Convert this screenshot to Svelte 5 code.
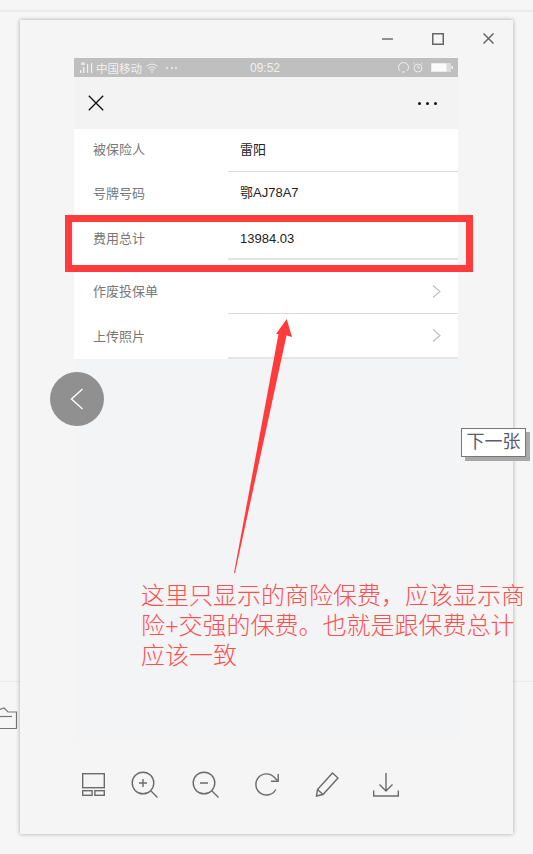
<script>
  const rows = [
    { label: "被保险人", value: "雷阳", first: true },
    { label: "号牌号码", value: "鄂AJ78A7" },
    { label: "费用总计", value: "13984.03", tall: true },
    { label: "作废投保单", arrow: true, gap: true },
    { label: "上传照片", arrow: true, last: true },
  ];
</script>

<div class="page">
  <div class="top-line"></div>
  <div class="side-line"></div>
  <svg class="folder" width="18" height="22" viewBox="0 0 18 22" fill="none" stroke="#777" stroke-width="1.2">
    <path d="M-2 3 L4 1 L8 5 H16.5 V21 Q16.5 21.5 16 21.5 H-2" />
    <path d="M-2 9.5 H12" />
  </svg>

  <div class="window">
    <div class="titlebar">
      <svg width="11" height="12" viewBox="0 0 11 12" stroke="#666" stroke-width="1.4"><path d="M0 6H11" /></svg>
      <svg width="12" height="12" viewBox="0 0 12 12" fill="none" stroke="#666" stroke-width="1.5"><rect x="0.75" y="0.75" width="10.5" height="10.5" /></svg>
      <svg width="11" height="11" viewBox="0 0 11 11" stroke="#666" stroke-width="1.5"><path d="M0.5 0.5L10.5 10.5M10.5 0.5L0.5 10.5" /></svg>
    </div>

    <div class="phone">
      <div class="statusbar">
        <div class="status-left">
          <svg width="13" height="12" viewBox="0 0 13 12" fill="#f1f1f1">
            <rect x="0" y="8" width="1.4" height="3" /><rect x="3" y="5" width="1.4" height="6" /><rect x="7" y="2" width="1.2" height="9" /><rect x="11" y="1" width="1.2" height="10" /><rect x="1" y="0.5" width="4" height="2.5" opacity="0.8" />
          </svg>
          <span class="carrier">中国移动</span>
          <svg width="12" height="10" viewBox="0 0 12 10" fill="none" stroke="#f1f1f1" stroke-width="0.9">
            <path d="M0.5 3.2Q6 -1 11.5 3.2M2.2 5.2Q6 2.2 9.8 5.2M4 7.2Q6 5.8 8 7.2" /><circle cx="6" cy="9" r="0.5" />
          </svg>
          <span class="status-dots"><i></i><i></i><i></i></span>
        </div>
        <span class="time">09:52</span>
        <div class="status-right">
          <svg width="11" height="11" viewBox="0 0 11 11" fill="none" stroke="#f1f1f1" stroke-width="1"><path d="M2 9Q0.5 7.5 0.5 5.5A5 5 0 0 1 10.5 5.5Q10.5 7.5 9 9" /><path d="M4 10H7" /></svg>
          <svg width="10" height="11" viewBox="0 0 10 11" fill="none" stroke="#f1f1f1" stroke-width="0.9"><circle cx="5" cy="6" r="4" /><path d="M5 3.5V6H7M0.5 2L2 0.7M9.5 2L8 0.7" /></svg>
          <svg width="22" height="9" viewBox="0 0 22 9"><rect x="0" y="0" width="20" height="9" fill="#f1f1f1" opacity="0.55" /><rect x="0.5" y="0.5" width="15" height="8" fill="#fbfbfb" /><rect x="20.5" y="3" width="1.5" height="3" fill="#f1f1f1" /></svg>
        </div>
      </div>

      <div class="navbar">
        <svg width="16" height="16" viewBox="0 0 16 16" stroke="#111" stroke-width="1.3"><path d="M0.8 0.8L15.2 15.2M15.2 0.8L0.8 15.2" /></svg>
        <span class="nav-dots"><i></i><i></i><i></i></span>
      </div>

      <div class="list">
        {#each rows as row}
          <div class="row" class:first={row.first} class:tall={row.tall} class:gap={row.gap} class:last={row.last}>
            <span class="label">{row.label}</span>
            <div class="value">
              <span>{row.value ?? ""}</span>
              {#if row.arrow}
                <svg width="9" height="13" viewBox="0 0 9 13" fill="none" stroke="#bdbdbd" stroke-width="1.1"><path d="M1 0.5L8 6.5L1 12.5" /></svg>
              {/if}
            </div>
          </div>
        {/each}
      </div>
    </div>

    <div class="toolbar">
      <svg class="first" width="28" height="28" viewBox="0 0 28 28" fill="none" stroke="#6b6b6b" stroke-width="1.4">
        <rect x="2.7" y="2.7" width="21.6" height="14" /><rect x="2.7" y="19.7" width="9.4" height="4.6" /><rect x="14.9" y="19.7" width="9.4" height="4.6" />
      </svg>
      <svg width="28" height="28" viewBox="0 0 28 28" fill="none" stroke="#6b6b6b" stroke-width="1.4">
        <circle cx="12" cy="12" r="10.8" /><path d="M20 20L26.5 26.5M8 12H16M12 8V16" />
      </svg>
      <svg width="28" height="28" viewBox="0 0 28 28" fill="none" stroke="#6b6b6b" stroke-width="1.4">
        <circle cx="12" cy="12" r="10.8" /><path d="M20 20L26.5 26.5M8 12H16" />
      </svg>
      <svg width="28" height="28" viewBox="0 0 28 28" fill="none" stroke="#6b6b6b" stroke-width="1.4">
        <path d="M22.8 18.5A10.6 10.6 0 1 1 21.5 6.5L24.5 9.5" /><path d="M25.2 3V10.2H18" />
      </svg>
      <svg width="28" height="28" viewBox="0 0 28 28" fill="none" stroke="#6b6b6b" stroke-width="1.4">
        <path d="M3.5 18.5L18.5 2L24 7L9 23.5L2.5 25Z" /><path d="M3.5 18.5L9 23.5" />
      </svg>
      <svg class="last-icon" width="28" height="28" viewBox="0 0 28 28" fill="none" stroke="#6b6b6b" stroke-width="1.4">
        <path d="M14 2V20M7.5 13.5L14 20L20.5 13.5" /><path d="M1.7 19.5V25H26.3V19.5" />
      </svg>
    </div>
  </div>

  <button class="prev" aria-label="上一张">
    <svg width="14" height="22" viewBox="0 0 14 22" fill="none" stroke="#fff" stroke-width="1.4"><path d="M12.5 1L1.5 11L12.5 21" /></svg>
  </button>

  <div class="tip">下一张</div>
  <div class="redbox"></div>
  <svg class="arrow" width="70" height="270" viewBox="0 0 70 270">
    <polygon points="61.7,9 67,27 61.5,25.5 10,263 9,263 53.5,24 51,24" fill="#ff3b3b" />
  </svg>
  <p class="note">这里只显示的商险保费，应该显示商险+交强的保费。也就是跟保费总计应该一致</p>
</div>

<style>
  :global(body) {
    margin: 0;
    background: #f6f6f6;
  }

  .page {
    position: relative;
    height: 854px;
    overflow: hidden;
    padding-top: 20px;
    box-sizing: border-box;
    font-family: "Liberation Sans", "Noto Sans CJK SC", sans-serif;
  }

  .top-line {
    position: absolute;
    top: 10px;
    left: 0;
    right: 0;
    height: 2px;
    background: #ebebeb;
  }

  .side-line {
    position: absolute;
    top: 681px;
    left: 0;
    right: 0;
    height: 1px;
    background: #ececec;
  }

  .folder {
    position: absolute;
    left: 0;
    top: 707px;
  }

  .window {
    position: relative;
    width: 493px;
    height: 814px;
    margin-left: 20px;
    background: #f5f5f5;
    box-shadow: 0 0 4px rgba(0, 0, 0, 0.32);
    border-radius: 1px;
  }

  .titlebar {
    height: 38px;
    padding: 13px 19px 0 0;
    box-sizing: border-box;
    display: flex;
    justify-content: flex-end;
    align-items: flex-start;
    gap: 39px;
  }

  .phone {
    width: 384px;
    height: 681px;
    margin-left: 54px;
    background: #f3f4f6;
  }

  .statusbar {
    position: relative;
    height: 19px;
    background: #bfbfbf;
    color: #f1f1f1;
    display: flex;
    align-items: center;
    justify-content: space-between;
    padding: 0 5px 0 6px;
    box-sizing: border-box;
    font-size: 11.5px;
  }

  .status-left {
    display: flex;
    align-items: center;
    gap: 3px;
  }

  .carrier {
    width: 47px;
  }

  .status-dots {
    display: flex;
    gap: 2.5px;
    margin-left: 5px;
  }

  .status-dots i {
    width: 2px;
    height: 2px;
    border-radius: 50%;
    background: #f1f1f1;
  }

  .time {
    font-size: 12px;
    margin-left: 73px;
  }

  .status-right {
    display: flex;
    align-items: center;
    gap: 4px;
    margin-left: auto;
  }

  .status-right svg:last-child {
    margin-left: 4px;
  }

  .navbar {
    height: 52px;
    background: #f3f3f3;
    display: flex;
    align-items: center;
    justify-content: space-between;
    padding: 0 21px 0 14px;
  }

  .nav-dots {
    display: flex;
    gap: 5px;
  }

  .nav-dots i {
    width: 3px;
    height: 3px;
    border-radius: 50%;
    background: #111;
  }

  .list {
    background: #fff;
  }

  .row {
    display: flex;
    height: 44px;
    box-sizing: border-box;
    background: #fff;
    line-height: 44px;
  }

  .row.first {
    height: 43px;
    line-height: 42px;
  }

  .row.gap {
    height: 54px;
    padding-top: 10px;
  }

  .row.tall,
  .row.last {
    line-height: 45px;
  }

  .row.last {
    height: 45px;
  }

  .label {
    width: 154px;
    padding-left: 19px;
    box-sizing: border-box;
    font-size: 13px;
    color: #777;
  }

  .value {
    flex: 1;
    display: flex;
    align-items: center;
    justify-content: space-between;
    padding: 0 17px 1px 12px;
    font-size: 13px;
    color: #222;
    border-bottom: 1px solid #d9d9d9;
  }

  .row.tall .value {
    padding: 2px 17px 0 12px;
    border-bottom: 2px solid #e2e2e2;
  }

  .row.last .value {
    border-bottom: 2px solid #e4e4e4;
  }

  .toolbar {
    display: flex;
    gap: 33px;
    margin: 32px 0 0 60px;
  }

  .toolbar .first {
    margin-right: -10px;
  }

  .toolbar .last-icon {
    margin-left: -3px;
  }

  .prev {
    position: absolute;
    left: 50px;
    top: 372px;
    width: 54px;
    height: 54px;
    padding: 0;
    border: none;
    border-radius: 50%;
    background: #909090;
    display: flex;
    align-items: center;
    justify-content: center;
  }

  .tip {
    position: absolute;
    left: 461px;
    top: 428px;
    width: 65px;
    height: 29px;
    box-sizing: border-box;
    border: 1px solid #777;
    background: #fff;
    box-shadow: 4px 4px 0 #a9a9a9;
    font-size: 18px;
    line-height: 26px;
    text-align: center;
    color: #5a5a6a;
  }

  .redbox {
    position: absolute;
    left: 65px;
    top: 215px;
    width: 408px;
    height: 57px;
    box-sizing: border-box;
    border: 7px solid #ff3b3b;
  }

  .arrow {
    position: absolute;
    left: 225px;
    top: 310px;
  }

  .note {
    position: absolute;
    left: 141px;
    top: 581px;
    width: 386px;
    margin: 0;
    font-family: "Liberation Serif", "Noto Sans CJK SC", serif;
    font-size: 24px;
    font-weight: 300;
    line-height: 30px;
    color: #ff4f4f;
  }
</style>
